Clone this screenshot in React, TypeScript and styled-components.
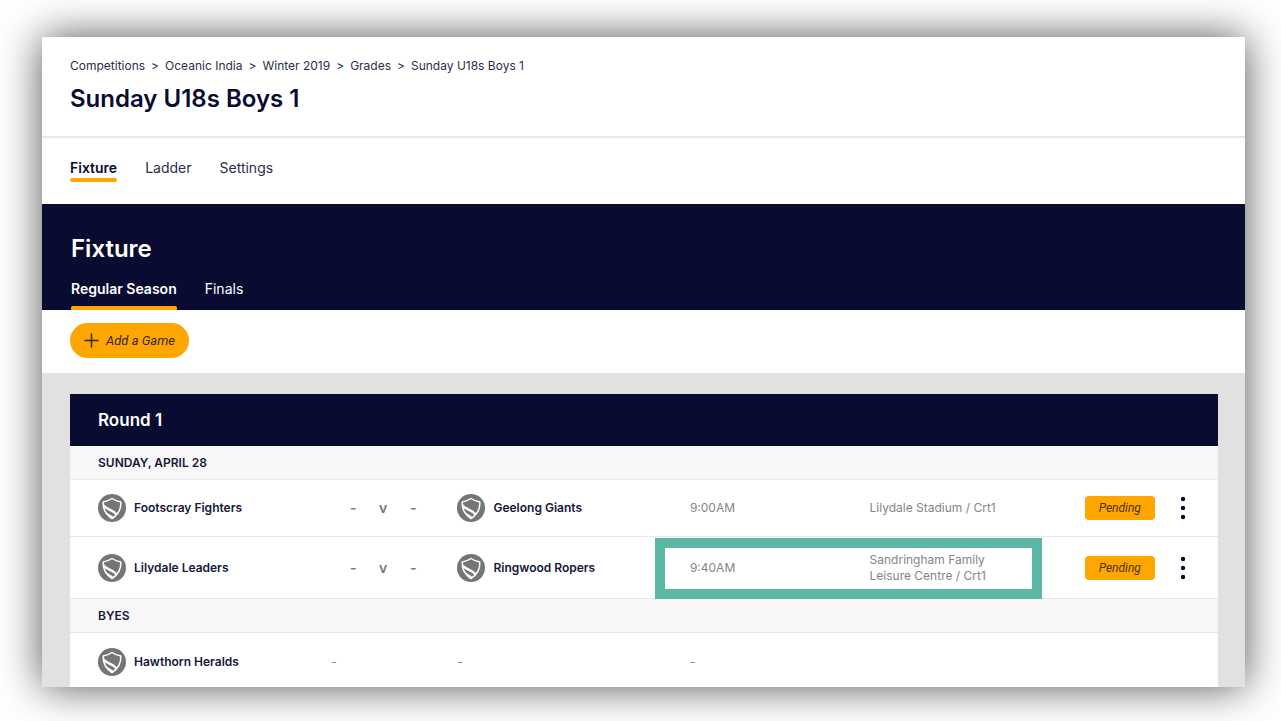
import React from "react";
import styled, { createGlobalStyle, css } from "styled-components";

const navy = "#090b30";
const orange = "#ffa600";
const line = "#e8e8e8";

const GlobalStyle = createGlobalStyle`
  *, *::before, *::after { box-sizing: border-box; }
  body {
    margin: 0;
    background: #fff;
    color: ${navy};
    font-family: Inter, "Liberation Sans", sans-serif;
    font-size: 12px;
    line-height: 16px;
  }
`;

const Page = styled.div`
  padding: 37px 36px 34px 42px;
  overflow: hidden;
`;

const Window = styled.main`
  background: #fff;
  box-shadow: 0 0 40px rgba(0, 0, 0, 0.68);
`;

const Header = styled.header`
  display: flex;
  flex-direction: column;
  gap: 10px;
  padding: 21px 28px 22px;
  border-bottom: 2px solid ${line};
`;

const Crumbs = styled.nav`
  display: flex;
  gap: 6px;
  color: #2b2d4c;
`;

const Crumb = styled.a`
  color: inherit;
  text-decoration: none;
`;

const Title = styled.h1`
  margin: 0;
  font-size: 24px;
  line-height: 30px;
  font-weight: 600;
`;

const Tabs = styled.nav<{ $hero?: boolean }>`
  display: flex;
  gap: 28px;
  padding: ${(p) => (p.$hero ? "0" : "20px 28px 22px")};
`;

const Tab = styled.a<{ $active?: boolean; $hero?: boolean }>`
  display: flex;
  flex-direction: column;
  gap: ${(p) => (p.$hero ? "7px" : "0")};
  color: ${(p) => (p.$hero ? "#fff" : "#2b2d4c")};
  font-size: 14px;
  line-height: 20px;
  text-decoration: none;
  &::after {
    content: "";
    height: 4px;
    border-radius: ${(p) => (p.$hero ? "2px 2px 0 0" : "2px")};
  }
  ${(p) =>
    p.$active &&
    css`
      font-weight: 600;
      color: ${p.$hero ? "#fff" : navy};
      &::after { background: ${orange}; }
    `}
`;

const Hero = styled.section`
  display: flex;
  flex-direction: column;
  gap: 14px;
  padding: 29px 29px 0;
  background: ${navy};
  color: #fff;
`;

const HeroTitle = styled.h2`
  margin: 0;
  font-size: 24px;
  line-height: 32px;
  font-weight: 600;
`;

const Actions = styled.div`
  display: flex;
  padding: 13px 28px 15px;
`;

const AddButton = styled.button`
  display: flex;
  align-items: center;
  gap: 7px;
  height: 35px;
  padding: 0 14px;
  border: 0;
  border-radius: 18px;
  background: ${orange};
  color: #33261a;
  font: italic 13px/16px Roboto, sans-serif;
`;

const Rounds = styled.section`
  padding: 21px 27px 0 28px;
  background: #e1e1e1;
`;

const RoundTitle = styled.h3`
  margin: 0;
  padding: 14px 28px;
  background: ${navy};
  color: #fff;
  font-size: 17px;
  line-height: 24px;
  font-weight: 600;
`;

const Games = styled.table`
  width: 100%;
  table-layout: fixed;
  border-collapse: separate;
  border-spacing: 0;
  background: #fff;
`;

const Col = styled.col<{ $share: string }>`
  width: ${(p) => p.$share};
`;

const GroupHead = styled.th`
  height: 34px;
  padding: 0 28px;
  border-bottom: 1px solid ${line};
  background: #f7f7f7;
  color: #15173a;
  font-weight: 600;
  text-align: left;
  text-transform: uppercase;
`;

const Row = styled.tr<{ $size: "short" | "normal" | "tall" }>`
  height: ${(p) => ({ short: "54px", normal: "57px", tall: "62px" })[p.$size]};
`;

const Cell = styled.td<{ $last?: boolean }>`
  position: relative;
  padding: ${(p) => (p.$last ? "4px 0 0" : "0")};
  border-bottom: ${(p) => (p.$last ? "0" : `1px solid ${line}`)};
  color: #858585;
  vertical-align: middle;
  &:first-child { padding-left: 28px; }
`;

const TeamBox = styled.div`
  display: flex;
  align-items: center;
  gap: 8px;
  color: #15173a;
  font-weight: 600;
`;

const Score = styled.div`
  display: grid;
  grid-template-columns: 30px 30px 30px;
  padding-left: 7px;
  color: #777;
  font-size: 14px;
  font-weight: 600;
  text-align: center;
`;

const Venue = styled.div`
  max-width: 144px;
`;

const StatusBox = styled.div`
  display: flex;
  align-items: center;
  justify-content: space-between;
  padding-right: 21px;
`;

const Status = styled.span`
  width: 70px;
  border-radius: 4px;
  background: ${orange};
  color: #4a3310;
  font: italic 12px/24px Roboto, sans-serif;
  text-align: center;
`;

const MenuButton = styled.button`
  display: flex;
  justify-content: center;
  width: 28px;
  padding: 0;
  border: 0;
  background: none;
  color: ${navy};
`;

const Highlight = styled.span`
  position: absolute;
  z-index: 1;
  inset: 1px -172px -1px -35px;
  border: 10px solid #5bb8a7;
  pointer-events: none;
`;

const Shield = () => (
  <svg width="28" height="28" viewBox="0 0 28 28" aria-hidden="true">
    <circle cx="14" cy="14" r="14" fill="#757575" />
    <path
      d="M14 4.500 Q18 7.200 22.800 8 Q23.400 18.500 14 24.500 Q4.600 18.500 5.200 8 Q10 7.200 14 4.500Z"
      fill="none"
      stroke="#fff"
      strokeWidth="1.500"
      strokeLinejoin="round"
    />
    <path
      d="M5.200 9.500 Q7.500 12.600 12 14.400 Q17.500 16.800 19.400 19.800 L17.800 21.600 Q16 18.800 11.500 17 Q7.600 15.400 5.800 13.200Z"
      fill="#fff"
    />
    <path d="M7.600 17.200 Q9.500 19.500 12.200 20.800 Q14.600 22 15.600 23.500 L14 24.500 Q9.800 21.800 7.600 17.200Z" fill="#fff" />
  </svg>
);

const Team = ({ name }: { name: string }) => (
  <TeamBox>
    <Shield />
    {name}
  </TeamBox>
);

interface Game {
  home: string;
  away: string;
  time: string;
  venue: string;
  tall?: boolean;
}

const games: Game[] = [
  { home: "Footscray Fighters", away: "Geelong Giants", time: "9:00AM", venue: "Lilydale Stadium / Crt1" },
  { home: "Lilydale Leaders", away: "Ringwood Ropers", time: "9:40AM", venue: "Sandringham Family Leisure Centre / Crt1", tall: true },
];

const crumbs = ["Competitions", "Oceanic India", "Winter 2019", "Grades", "Sunday U18s Boys 1"];

const GameRow = ({ game }: { game: Game }) => (
  <Row $size={game.tall ? "tall" : "normal"}>
    <Cell><Team name={game.home} /></Cell>
    <Cell>
      <Score><span>-</span><span>v</span><span>-</span></Score>
    </Cell>
    <Cell><Team name={game.away} /></Cell>
    <Cell>
      {game.time}
      {game.tall && <Highlight />}
    </Cell>
    <Cell><Venue>{game.venue}</Venue></Cell>
    <Cell>
      <StatusBox>
        <Status>Pending</Status>
        <MenuButton type="button" aria-label={`Options for ${game.home}`}>
          <svg width="6" height="24" viewBox="0 0 6 24" fill="currentColor" aria-hidden="true">
            <circle cx="3" cy="3" r="2.200" />
            <circle cx="3" cy="12" r="2.200" />
            <circle cx="3" cy="21" r="2.200" />
          </svg>
        </MenuButton>
      </StatusBox>
    </Cell>
  </Row>
);

export default function App() {
  return (
    <Page>
      <GlobalStyle />
      <Window>
        <Header>
          <Crumbs aria-label="Breadcrumb">
            {crumbs.map((c, i) => (
              <React.Fragment key={c}>
                {i > 0 && <span>&gt;</span>}
                <Crumb href="#">{c}</Crumb>
              </React.Fragment>
            ))}
          </Crumbs>
          <Title>Sunday U18s Boys 1</Title>
        </Header>
        <Tabs>
          <Tab href="#" $active>Fixture</Tab>
          <Tab href="#">Ladder</Tab>
          <Tab href="#">Settings</Tab>
        </Tabs>
        <Hero>
          <HeroTitle>Fixture</HeroTitle>
          <Tabs $hero>
            <Tab href="#" $hero $active>Regular Season</Tab>
            <Tab href="#" $hero>Finals</Tab>
          </Tabs>
        </Hero>
        <Actions>
          <AddButton type="button">
            <svg width="15" height="15" viewBox="0 0 15 15" stroke="currentColor" strokeWidth="1.500" strokeLinecap="round" aria-hidden="true">
              <path d="M7.500 1V14M1 7.500H14" />
            </svg>
            Add a Game
          </AddButton>
        </Actions>
        <Rounds>
          <RoundTitle>Round 1</RoundTitle>
          <Games>
            <colgroup>
              <Col $share="22.75%" />
              <Col $share="11%" />
              <Col $share="20.25%" />
              <Col $share="15.65%" />
              <Col $share="18.75%" />
              <Col $share="11.6%" />
            </colgroup>
            <tbody>
              <tr><GroupHead colSpan={6}>Sunday, April 28</GroupHead></tr>
              {games.map((g) => <GameRow key={g.home} game={g} />)}
            </tbody>
            <tbody>
              <tr><GroupHead colSpan={6}>Byes</GroupHead></tr>
              <Row $size="short">
                <Cell $last><Team name="Hawthorn Heralds" /></Cell>
                <Cell $last>-</Cell>
                <Cell $last>-</Cell>
                <Cell $last>-</Cell>
                <Cell $last />
                <Cell $last />
              </Row>
            </tbody>
          </Games>
        </Rounds>
      </Window>
    </Page>
  );
}
